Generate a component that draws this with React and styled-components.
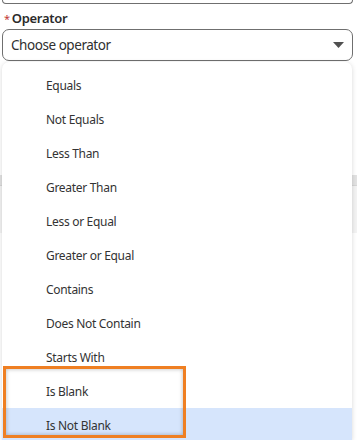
import React from "react";
import styled, { createGlobalStyle } from "styled-components";

const Global = createGlobalStyle`
  html, body { margin: 0; padding: 0; background: #ffffff; }
  body { font-family: "Noto Sans", "Open Sans", sans-serif; color: #2e2e2e; overflow: hidden; }
`;

const Page = styled.div`
  position: relative;
  width: 357px;
  height: 440px;
  overflow: hidden;
  background: #ffffff;
`;

const PrevField = styled.div`
  height: 3px;
  margin: 0 4px 0 2px;
  border: 1px solid #6f6f6f;
  border-top: none;
  border-radius: 0 0 7px 7px;
`;

const Label = styled.div`
  display: flex;
  align-items: baseline;
  gap: 2px;
  margin: 7px 0 0 4px;
  font-size: 13px;
  font-weight: 600;
  line-height: 15px;
  letter-spacing: -0.3px;
  color: #2b2b2b;
`;

const Req = styled.span`
  color: #c23934;
  font-size: 11px;
  font-weight: 400;
`;

const Select = styled.div`
  display: flex;
  align-items: center;
  justify-content: space-between;
  height: 30px;
  margin: 3px 4px 0 2px;
  padding: 0 8px 0 8px;
  border: 1px solid #6f6f6f;
  border-radius: 7px;
  font-size: 13.5px;
  letter-spacing: -0.45px;
  color: #303030;
`;

const Backdrop = styled.div`
  margin-top: 114px;
  display: flex;
  flex-direction: column;
`;

const BandHeader = styled.div`
  height: 10px;
  background: #e2e2e2;
  border-bottom: 1px solid #d6d6d6;
`;

const BandBody = styled.div`
  height: 47px;
  background: #f3f3f3;
`;

const Dropdown = styled.div`
  position: absolute;
  top: 62px;
  left: 2px;
  width: 350px;
  bottom: 0;
  padding-top: 6px;
  background: #ffffff;
  border-radius: 7px 7px 0 0;
  box-shadow: 0 1px 5px rgba(0, 0, 0, 0.16);
  display: flex;
  flex-direction: column;
`;

const Item = styled.div`
  flex: 0 0 34px;
  display: flex;
  align-items: center;
  padding-left: 44px;
  font-size: 12px;
  letter-spacing: -0.3px;
  color: #333333;
  background: ${(p) => (p.$active ? "#d6e5fc" : "transparent")};
`;

const Highlight = styled.div`
  position: absolute;
  left: 3px;
  top: 366px;
  width: 177px;
  height: 66px;
  border: 3px solid #ef7f22;
  box-shadow: inset 0 0 4px rgba(0, 0, 0, 0.28);
  pointer-events: none;
`;

const Caret = () => (
  <svg width="11" height="6" viewBox="0 0 11 6">
    <path d="M0 0 L11 0 L5.5 6 Z" fill="#505050" />
  </svg>
);

const items = [
  "Equals",
  "Not Equals",
  "Less Than",
  "Greater Than",
  "Less or Equal",
  "Greater or Equal",
  "Contains",
  "Does Not Contain",
  "Starts With",
  "Is Blank",
  "Is Not Blank",
];

export default function App() {
  return (
    <Page>
      <Global />
      <PrevField />
      <Label>
        <Req>*</Req>
        Operator
      </Label>
      <Select>
        <span>Choose operator</span>
        <Caret />
      </Select>
      <Backdrop>
        <BandHeader />
        <BandBody />
      </Backdrop>
      <Dropdown>
        {items.map((t) => (
          <Item key={t} $active={t === "Is Not Blank"}>
            {t}
          </Item>
        ))}
      </Dropdown>
      <Highlight />
    </Page>
  );
}
